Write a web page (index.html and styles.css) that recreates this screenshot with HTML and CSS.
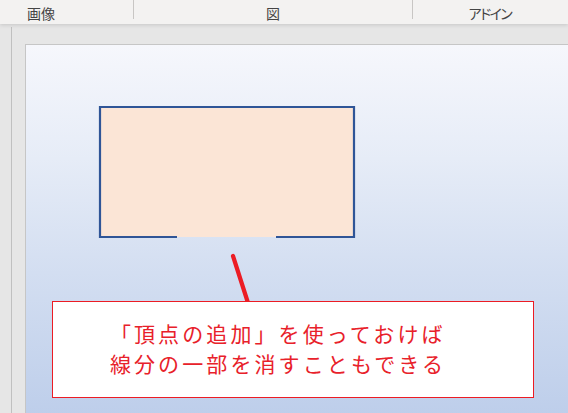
FILE: index.html
```html
<!DOCTYPE html>
<html lang="ja">
<head>
<meta charset="utf-8">
<link rel="stylesheet" href="styles.css">
</head>
<body>
<div class="tabs">
  <div class="tab tab-image">画像</div>
  <div class="sep"></div>
  <div class="tab tab-shape">図</div>
  <div class="sep"></div>
  <div class="tab tab-addin">アドイン</div>
</div>
<div class="workspace">
  <div class="gutter"><div class="gline"></div></div>
  <div class="slide">
    <svg class="drawing" width="560" height="380" viewBox="0 0 560 380">
      <rect x="75" y="63" width="254" height="130" fill="#fbe5d6"/>
      <path d="M152 193 L75 193 L75 63 L329 63 L329 193 L251 193" fill="none" stroke="#2f5597" stroke-width="2.2"/>
      <line x1="208" y1="212" x2="224" y2="262" stroke="#ec1c24" stroke-width="4.2" stroke-linecap="round"/>
    </svg>
    <div class="callout">
      <p class="callout-text">「頂点の追加」を使っておけば<br>線分の一部を消すこともできる</p>
    </div>
  </div>
</div>
</body>
</html>
```
FILE: styles.css
```css
html, body {
  margin: 0;
  padding: 0;
}
body {
  width: 568px;
  height: 413px;
  overflow: hidden;
  background: #e6e6e6;
  font-family: "Noto Sans CJK JP", "Noto Sans", sans-serif;
}
.tabs {
  position: relative;
  z-index: 2;
  display: flex;
  height: 24px;
  background: #f3f2f1;
  box-shadow: 0 1px 4px rgba(0, 0, 0, 0.14);
}
.tab {
  font-size: 14px;
  line-height: 26px;
  color: #444444;
  white-space: nowrap;
}
.tab-image {
  width: 106px;
  padding-left: 27px;
}
.tab-shape {
  width: 278px;
  text-align: center;
}
.tab-addin {
  padding-left: 55px;
  letter-spacing: -3.5px;
  font-size: 14px;
}
.sep {
  width: 1px;
  height: 19px;
  background: #c8c6c4;
}
.workspace {
  display: flex;
  height: 389px;
}
.gutter {
  width: 25px;
  flex: none;
}
.gline {
  margin: 3px 0 0 11px;
  width: 1px;
  height: 390px;
  background: #c0c0c0;
}
.slide {
  position: relative;
  margin-top: 20px;
  flex: 1;
  height: 380px;
  border-left: 1px solid #c6c6c6;
  border-top: 1px solid #c6c6c6;
  background: linear-gradient(180deg, #f6f7fc 0%, #e6ecf7 30%, #d3def1 60%, #bccdea 100%);
}
.drawing {
  position: absolute;
  left: -1px;
  top: -1px;
}
.callout {
  position: absolute;
  left: 26px;
  top: 256px;
  width: 480px;
  height: 95px;
  border: 1px solid #ec1c24;
  background: #ffffff;
  display: flex;
  align-items: center;
  justify-content: center;
}
.callout-text {
  margin: 0;
  padding: 0 30px 4px 0;
  font-size: 21px;
  line-height: 30px;
  letter-spacing: 3.1px;
  color: #e8212a;
  text-align: left;
}
```
